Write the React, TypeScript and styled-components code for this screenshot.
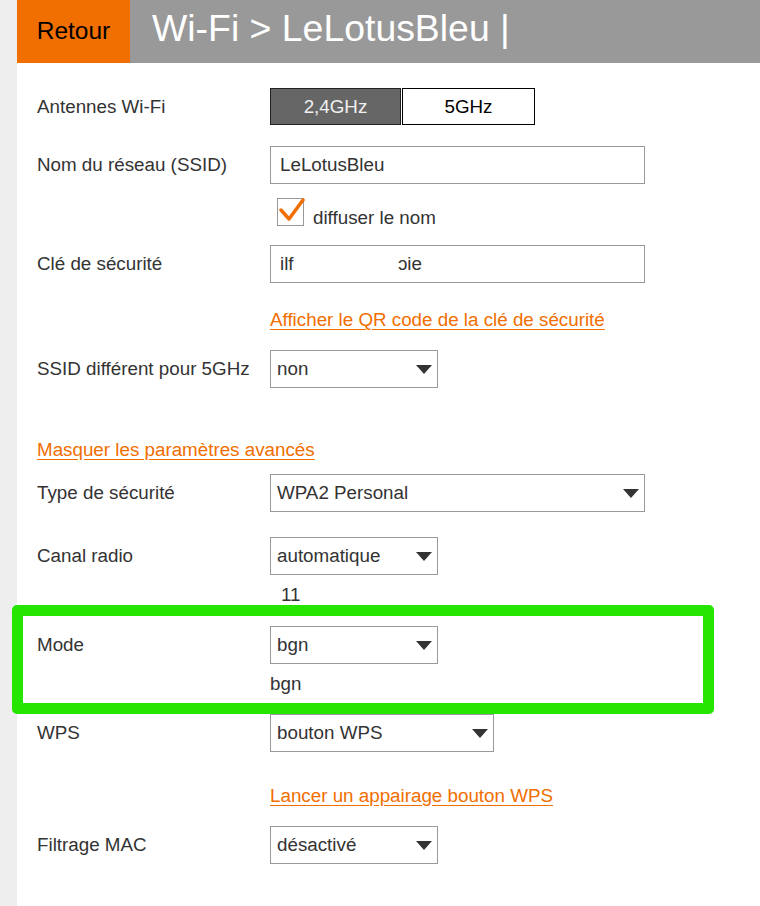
import React from "react";
import styled, { createGlobalStyle } from "styled-components";

const GlobalStyle = createGlobalStyle`
  html, body {
    margin: 0;
    padding: 0;
    background: #eeeeee;
  }
  body {
    font-family: "Liberation Sans", Arial, Helvetica, sans-serif;
    color: #333333;
  }
`;

const Page = styled.div`
  position: relative;
  width: 760px;
  height: 906px;
  overflow: hidden;
  background: #eeeeee;
`;

const Main = styled.div`
  margin-left: 17px;
  height: 100%;
  background: #ffffff;
`;

const Header = styled.div`
  display: flex;
  height: 63px;
  background: #999999;
`;

const BackButton = styled.div`
  width: 113px;
  background: #f16e00;
  color: #000000;
  font-size: 24.5px;
  display: flex;
  align-items: center;
  justify-content: center;
  padding-bottom: 2px;
  box-sizing: border-box;
`;

const Title = styled.h1`
  margin: 0;
  padding-left: 22px;
  font-weight: normal;
  font-size: 37.4px;
  color: #ffffff;
  display: flex;
  align-items: center;
  padding-bottom: 6px;
`;

const Form = styled.div`
  display: flex;
  flex-direction: column;
  padding-left: 20px;
  font-size: 18.8px;
`;

const Row = styled.div<{ $mt: number }>`
  display: grid;
  grid-template-columns: 233px 1fr;
  margin-top: ${(p) => p.$mt}px;
`;

const Label = styled.div`
  line-height: 38px;
  color: #333333;
`;

const Controls = styled.div`
  display: flex;
  flex-direction: column;
  align-items: flex-start;
`;

const Toggle = styled.div`
  display: flex;
  gap: 1px;
`;

const ToggleButton = styled.div<{ $active?: boolean }>`
  height: 37px;
  box-sizing: border-box;
  width: ${(p) => (p.$active ? 131 : 133)}px;
  border: 1px solid ${(p) => (p.$active ? "#222222" : "#000000")};
  background: ${(p) => (p.$active ? "#666666" : "#ffffff")};
  color: ${(p) => (p.$active ? "#f0f0f0" : "#000000")};
  display: flex;
  align-items: center;
  justify-content: center;
`;

const TextInput = styled.div<{ $w: number }>`
  width: ${(p) => p.$w}px;
  height: 38px;
  box-sizing: border-box;
  border: 1px solid #999999;
  padding-left: 9px;
  display: flex;
  align-items: center;
  color: #333333;
  white-space: pre;
`;

const Select = styled.div<{ $w: number }>`
  width: ${(p) => p.$w}px;
  height: 38px;
  box-sizing: border-box;
  border: 1px solid #999999;
  padding: 0 5px 0 6px;
  display: flex;
  align-items: center;
  justify-content: space-between;
  color: #333333;
`;

const CheckLine = styled.div`
  display: flex;
  align-items: flex-end;
  gap: 9px;
  margin-top: 14px;
  margin-left: 7px;
  height: 28px;
`;

const CheckBox = styled.div`
  width: 27px;
  height: 28px;
  box-sizing: border-box;
  border: 1px solid #999999;
  position: relative;
`;

const CheckMark = styled.svg`
  position: absolute;
  left: 1px;
  top: -2px;
`;

const CheckText = styled.span`
  line-height: 22px;
  margin-bottom: -3px;
`;

const Link = styled.a<{ $mt?: number }>`
  color: #f16e00;
  text-decoration: underline;
  text-underline-offset: 3px;
  line-height: 22px;
  margin-top: ${(p) => p.$mt ?? 0}px;
  cursor: pointer;
`;

const Note = styled.div<{ $pl?: number }>`
  margin-top: 9px;
  line-height: 22px;
  padding-left: ${(p) => p.$pl ?? 0}px;
  color: #333333;
`;

const StandaloneLink = styled(Link)`
  align-self: flex-start;
`;

const Highlight = styled.div`
  position: absolute;
  left: 12px;
  top: 605px;
  width: 702px;
  height: 109px;
  box-sizing: border-box;
  border: 11px solid #24e600;
  border-radius: 5px;
  pointer-events: none;
`;

const Arrow = () => (
  <svg width="16" height="9" viewBox="0 0 16 9">
    <polygon points="0,0 16,0 8,9" fill="#333333" />
  </svg>
);

const Dropdown = ({ w, value }: { w: number; value: string }) => (
  <Select $w={w}>
    <span>{value}</span>
    <Arrow />
  </Select>
);

export default function App() {
  return (
    <>
      <GlobalStyle />
      <Page>
        <Main>
          <Header>
            <BackButton>Retour</BackButton>
            <Title>Wi-Fi &gt; LeLotusBleu |</Title>
          </Header>
          <Form>
            <Row $mt={25}>
              <Label>Antennes Wi-Fi</Label>
              <Controls>
                <Toggle>
                  <ToggleButton $active>2,4GHz</ToggleButton>
                  <ToggleButton>5GHz</ToggleButton>
                </Toggle>
              </Controls>
            </Row>
            <Row $mt={20}>
              <Label>Nom du réseau (SSID)</Label>
              <Controls>
                <TextInput $w={375}>LeLotusBleu</TextInput>
                <CheckLine>
                  <CheckBox>
                    <CheckMark width="26" height="26" viewBox="0 0 26 26">
                      <path
                        d="M2 13 L10 22 L24 3"
                        fill="none"
                        stroke="#f16e00"
                        strokeWidth="3.5"
                        strokeLinecap="round"
                        strokeLinejoin="round"
                      />
                    </CheckMark>
                  </CheckBox>
                  <CheckText>diffuser le nom</CheckText>
                </CheckLine>
              </Controls>
            </Row>
            <Row $mt={19}>
              <Label>Clé de sécurité</Label>
              <Controls>
                <TextInput $w={375}>{"ilf                    \u0254ie"}</TextInput>
                <Link $mt={26}>Afficher le QR code de la clé de sécurité</Link>
              </Controls>
            </Row>
            <Row $mt={19}>
              <Label>SSID différent pour 5GHz</Label>
              <Controls>
                <Dropdown w={168} value="non" />
              </Controls>
            </Row>
            <StandaloneLink $mt={51}>Masquer les paramètres avancés</StandaloneLink>
            <Row $mt={13}>
              <Label>Type de sécurité</Label>
              <Controls>
                <Dropdown w={375} value="WPA2 Personal" />
              </Controls>
            </Row>
            <Row $mt={25}>
              <Label>Canal radio</Label>
              <Controls>
                <Dropdown w={168} value="automatique" />
                <Note $pl={11}>11</Note>
              </Controls>
            </Row>
            <Row $mt={20}>
              <Label>Mode</Label>
              <Controls>
                <Dropdown w={168} value="bgn" />
                <Note>bgn</Note>
              </Controls>
            </Row>
            <Row $mt={19}>
              <Label>WPS</Label>
              <Controls>
                <Dropdown w={224} value="bouton WPS" />
                <Link $mt={33}>Lancer un appairage bouton WPS</Link>
              </Controls>
            </Row>
            <Row $mt={19}>
              <Label>Filtrage MAC</Label>
              <Controls>
                <Dropdown w={168} value="désactivé" />
              </Controls>
            </Row>
          </Form>
        </Main>
        <Highlight />
      </Page>
    </>
  );
}
